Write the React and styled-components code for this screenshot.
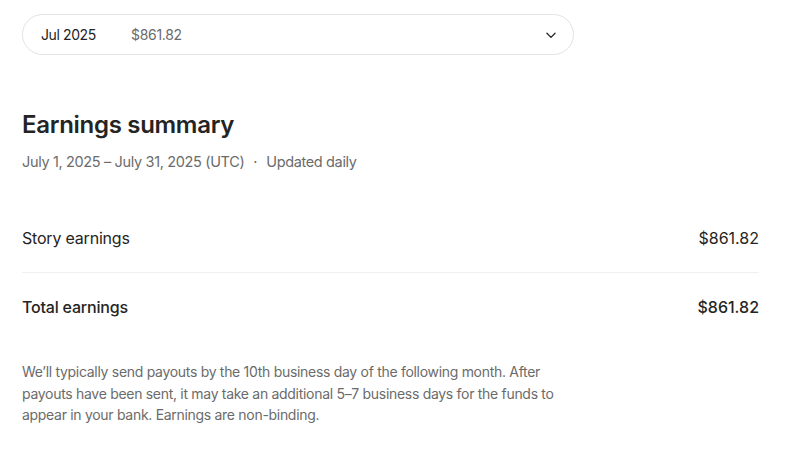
import React from "react";
import styled, { createGlobalStyle } from "styled-components";

const GlobalStyle = createGlobalStyle`
  body {
    margin: 0;
    background: #ffffff;
    font-family: Inter, "Liberation Sans", sans-serif;
    color: #242424;
  }
`;

const Page = styled.div`
  width: 737px;
  padding: 14px 0 0 22px;
`;

const MonthPicker = styled.button`
  display: flex;
  align-items: center;
  width: 552px;
  height: 41px;
  padding: 0 15px 0 18px;
  box-sizing: border-box;
  border: 1px solid #e2e2e2;
  border-radius: 21px;
  background: #fff;
  font-family: inherit;
  cursor: pointer;
`;

const Month = styled.span`
  font-size: 14px;
  letter-spacing: -0.4px;
  color: #242424;
  width: 90px;
  text-align: left;
`;

const PickerAmount = styled.span`
  font-size: 14px;
  letter-spacing: -0.3px;
  color: #6b6b6b;
  flex: 1;
  text-align: left;
`;

const Heading = styled.h1`
  margin: 55px 0 0;
  font-size: 24px;
  line-height: 30px;
  font-weight: 600;
  letter-spacing: -0.3px;
  color: #242424;
`;

const Meta = styled.div`
  margin-top: 12px;
  font-size: 14.5px;
  line-height: 20px;
  letter-spacing: -0.35px;
  color: #6b6b6b;
  display: flex;
  gap: 9px;
`;

const Rows = styled.div`
  margin-top: 32px;
`;

const Row = styled.div`
  display: flex;
  justify-content: space-between;
  align-items: center;
  height: 68px;
  font-size: 16px;
  letter-spacing: -0.2px;
  font-weight: ${(p) => (p.total ? 500 : 400)};
  color: #242424;
  border-bottom: ${(p) => (p.divider ? "1px solid #f0f0f0" : "none")};
`;

const Amount = styled.span`
  letter-spacing: 0;
`;

const Note = styled.p`
  margin: 20px 0 0;
  max-width: 548px;
  font-size: 14px;
  line-height: 21.5px;
  letter-spacing: -0.3px;
  color: #6b6b6b;
`;

const Chevron = () => (
  <svg width="14" height="14" viewBox="0 0 24 24" fill="none" stroke="#242424" strokeWidth="2.2" strokeLinecap="round" strokeLinejoin="round">
    <path d="M5 9l7 7 7-7" />
  </svg>
);

export default function App() {
  return (
    <>
      <GlobalStyle />
      <Page>
        <MonthPicker>
          <Month>Jul 2025</Month>
          <PickerAmount>$861.82</PickerAmount>
          <Chevron />
        </MonthPicker>
        <Heading>Earnings summary</Heading>
        <Meta>
          <span>July 1, 2025 – July 31, 2025 (UTC)</span>
          <span>·</span>
          <span>Updated daily</span>
        </Meta>
        <Rows>
          <Row divider>
            <span>Story earnings</span>
            <Amount>$861.82</Amount>
          </Row>
          <Row total>
            <span>Total earnings</span>
            <Amount>$861.82</Amount>
          </Row>
        </Rows>
        <Note>
          We’ll typically send payouts by the 10th business day of the following month. After
          payouts have been sent, it may take an additional 5–7 business days for the funds to
          appear in your bank. Earnings are non-binding.
        </Note>
      </Page>
    </>
  );
}
